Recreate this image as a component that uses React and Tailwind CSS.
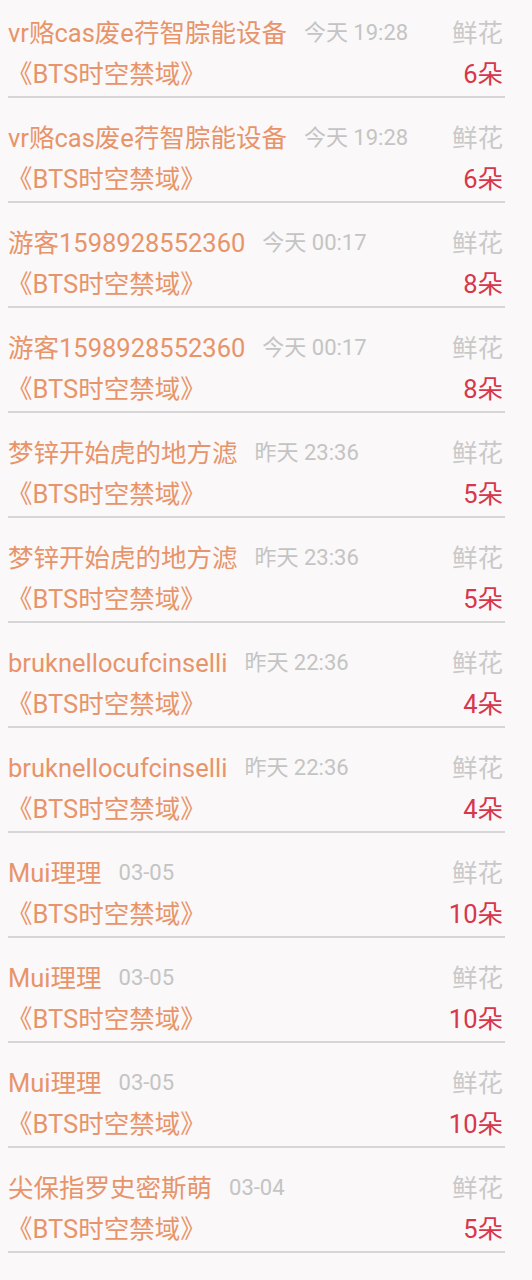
const rows = [
  { name: 'vr赂cas废e荇智腙能设备', time: '今天 19:28', count: 6 },
  { name: 'vr赂cas废e荇智腙能设备', time: '今天 19:28', count: 6 },
  { name: '游客1598928552360', time: '今天 00:17', count: 8 },
  { name: '游客1598928552360', time: '今天 00:17', count: 8 },
  { name: '梦锌开始虎的地方滤', time: '昨天 23:36', count: 5 },
  { name: '梦锌开始虎的地方滤', time: '昨天 23:36', count: 5 },
  { name: 'bruknellocufcinselli', time: '昨天 22:36', count: 4 },
  { name: 'bruknellocufcinselli', time: '昨天 22:36', count: 4 },
  { name: 'Mui理理', time: '03-05', count: 10 },
  { name: 'Mui理理', time: '03-05', count: 10 },
  { name: 'Mui理理', time: '03-05', count: 10 },
  { name: '尖保指罗史密斯萌', time: '03-04', count: 5 },
]

const FlowerRow = ({ row, first }) => (
  <div className={first ? 'pt-[17px]' : 'pt-[24px]'}>
    <div className="flex items-center justify-between leading-[32px] pr-[2px]">
      <div className="flex items-center min-w-0">
        <span className="text-[25.5px] text-[#e8946a] whitespace-nowrap">{row.name}</span>
        <span className="ml-[17px] text-[22px] text-[#c4c4c4] whitespace-nowrap">{row.time}</span>
      </div>
      <span className="text-[25.5px] text-[#c9c9c9]">鲜花</span>
    </div>
    <div className="flex items-center justify-between leading-[32px] mt-[9px] pr-[2px]">
      <span className="text-[25.5px] text-[#e8946a] -ml-[1px]">《BTS时空禁域》</span>
      <span className="text-[25.5px] text-[#d7364b]">{row.count}朵</span>
    </div>
    <div className="mt-[6px] h-[2px] bg-[#d6d6d6]" />
  </div>
)

export default function App() {
  return (
    <div
      className="min-h-screen w-[532px] bg-[#faf8f8] pl-[8px] pr-[27px]"
      style={{ fontFamily: 'Roboto, "Noto Sans CJK SC", sans-serif' }}
    >
      {rows.map((row, i) => (
        <FlowerRow key={i} row={row} first={i === 0} />
      ))}
    </div>
  )
}
